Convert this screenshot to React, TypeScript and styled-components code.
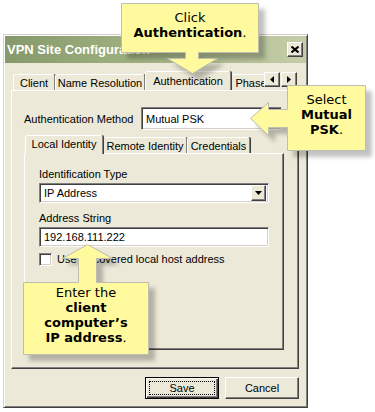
import React from 'react';
import styled, { createGlobalStyle } from 'styled-components';

const GlobalStyle = createGlobalStyle`
  html, body {
    margin: 0;
    padding: 0;
    background: #ffffff;
  }
  body {
    font-family: 'Liberation Sans', Arial, sans-serif;
  }
`;

const FACE = '#ece9d8';

const outerTabs = [
  { label: 'Client', w: 42 },
  { label: 'Name Resolution', w: 90 },
  { label: 'Authentication', w: 86, active: true },
  { label: 'Phase', w: 40 },
];

const innerTabs = [
  { label: 'Local Identity', w: 78, active: true },
  { label: 'Remote Identity', w: 84 },
  { label: 'Credentials', w: 63 },
];

const App = () => {
  return (
    <Page>
      <GlobalStyle />
      <Dialog>
        <TitleBar>
          <Title>VPN Site Configuration</Title>
          <CloseButton aria-label='Close'>
            <svg width='8' height='7' viewBox='0 0 8 7'>
              <path d='M0.5 0.5 L7.5 6.5 M7.5 0.5 L0.5 6.5' stroke='#000' strokeWidth='2' />
            </svg>
          </CloseButton>
        </TitleBar>

        <Body>
          <TabStrip>
            <TabList>
              {outerTabs.map((t) => (
                <Tab key={t.label} $w={t.w} $active={t.active} $h={t.active ? 20 : 16}>
                  {t.label}
                </Tab>
              ))}
            </TabList>
            <ScrollButton>
              <svg width='4' height='7' viewBox='0 0 4 7'>
                <polygon points='4,0 4,7 0,3.5' fill='#000' />
              </svg>
            </ScrollButton>
            <ScrollButton>
              <svg width='4' height='7' viewBox='0 0 4 7'>
                <polygon points='0,0 0,7 4,3.5' fill='#000' />
              </svg>
            </ScrollButton>
          </TabStrip>

          <Panel>
            <AuthRow>
              <AuthLabel>Authentication Method</AuthLabel>
              <TextBox $w={141} $h={23}>Mutual PSK</TextBox>
            </AuthRow>

            <InnerTabStrip>
              {innerTabs.map((t) => (
                <Tab key={t.label} $w={t.w} $active={t.active} $h={t.active ? 19 : 16}>
                  {t.label}
                </Tab>
              ))}
            </InnerTabStrip>

            <InnerPanel>
              <FieldLabel>Identification Type</FieldLabel>
              <SelectBox>
                <SelectValue>IP Address</SelectValue>
                <DropButton>
                  <svg width='7' height='4' viewBox='0 0 7 4'>
                    <polygon points='0,0 7,0 3.5,4' fill='#000' />
                  </svg>
                </DropButton>
              </SelectBox>

              <FieldLabel $gap={9}>Address String</FieldLabel>
              <TextBox $w={230} $h={20}>192.168.111.222</TextBox>

              <CheckRow>
                <CheckBox />
                <span>Use discovered local host address</span>
              </CheckRow>
            </InnerPanel>
          </Panel>

          <ButtonRow>
            <PushButton $default>Save</PushButton>
            <PushButton>Cancel</PushButton>
          </ButtonRow>
        </Body>
      </Dialog>

      <CalloutLayer>
        <CalloutShapes width='375' height='412' viewBox='0 0 375 412'>
          <path d='M121.5 3.5 H258.5 V52.5 H198.5 V58.5 H217.5 L192.5 73.5 L167.5 58.5 H185.5 V52.5 H121.5 Z' />
          <path d='M287.5 85.5 H365.5 V150.5 H287.5 V127.5 H268.5 V135.5 L250.5 118.5 L268.5 102.5 V109.5 H287.5 Z' />
          <path d='M23.5 282.5 H78.5 V258.5 H62.5 L87.5 244.5 L112.5 258.5 H96.5 V282.5 H148.5 V354.5 H23.5 Z' />
        </CalloutShapes>

        <CalloutText $x={121} $y={3} $w={138} $pt={7}>
          Click
          <br />
          <b>Authentication</b>.
        </CalloutText>
        <CalloutText $x={287} $y={85} $w={79} $pt={6.5}>
          Select
          <br />
          <b>Mutual</b>
          <br />
          <b>PSK</b>.
        </CalloutText>
        <CalloutText $x={23} $y={282} $w={126} $pt={2.5}>
          Enter the
          <br />
          <b>client</b>
          <br />
          <b>computer’s</b>
          <br />
          <b>IP address</b>.
        </CalloutText>
      </CalloutLayer>
    </Page>
  );
};

export default App;

const Page = styled.div`
  position: relative;
  width: 375px;
  height: 412px;
  overflow: hidden;
  background: #ffffff;
  font-size: 11px;
  color: #000;
`;

const Dialog = styled.div`
  box-sizing: border-box;
  width: 305px;
  height: 374px;
  margin: 34px 0 0 3px;
  padding: 1px;
  display: flex;
  flex-direction: column;
  background: ${FACE};
  border: 1px solid;
  border-color: #d4d0c8 #404040 #404040 #d4d0c8;
  box-shadow: inset 1px 1px 0 #ffffff, inset -1px -1px 0 #808080;
`;

const TitleBar = styled.div`
  flex: none;
  height: 27px;
  display: flex;
  align-items: center;
  justify-content: space-between;
  padding: 0 3px 0 2px;
  background: linear-gradient(90deg, #86996a 0%, #9eaf7f 40%, #c4cda8 100%);
`;

const Title = styled.span`
  font: bold 13px 'Liberation Sans', Arial, sans-serif;
  color: #ffffff;
`;

const CloseButton = styled.button`
  box-sizing: border-box;
  width: 16px;
  height: 15px;
  padding: 0;
  display: flex;
  align-items: center;
  justify-content: center;
  background: ${FACE};
  border: 1px solid;
  border-color: #ffffff #404040 #404040 #ffffff;
  box-shadow: inset -1px -1px 0 #808080;
`;

const Body = styled.div`
  flex: 1;
  display: flex;
  flex-direction: column;
  padding: 8px 7px 7px 6px;
`;

const TabStrip = styled.div`
  display: flex;
  height: 19px;
`;

const TabList = styled.div`
  display: flex;
  align-items: flex-end;
  width: 253px;
  padding-left: 2px;
  box-sizing: border-box;
  overflow: hidden;
  position: relative;
  z-index: 2;
`;

const Tab = styled.div<{ $w: number; $h: number; $active?: boolean }>`
  flex: none;
  box-sizing: border-box;
  width: ${(p) => p.$w}px;
  height: ${(p) => p.$h}px;
  margin-bottom: ${(p) => (p.$active ? -1 : 0)}px;
  display: flex;
  align-items: center;
  justify-content: center;
  padding-bottom: ${(p) => (p.$active ? 2 : 0)}px;
  background: ${FACE};
  border: 1px solid;
  border-bottom: none;
  border-color: #ffffff #808080 transparent #ffffff;
  border-radius: 2px 2px 0 0;
  box-shadow: 1px 0 0 #404040;
  white-space: nowrap;
  position: relative;
  z-index: ${(p) => (p.$active ? 2 : 1)};
`;

const ScrollButton = styled.button`
  flex: none;
  box-sizing: border-box;
  width: 16px;
  height: 15px;
  margin: 1px 1px 0 0;
  padding: 0;
  display: flex;
  align-items: center;
  justify-content: center;
  background: ${FACE};
  border: 1px solid;
  border-color: #ffffff #404040 #404040 #ffffff;
  box-shadow: inset -1px -1px 0 #808080;

  &:last-child {
    margin-right: 0;
  }
`;

const Panel = styled.div`
  flex: none;
  box-sizing: border-box;
  height: 279px;
  display: flex;
  flex-direction: column;
  padding: 16px 14px 18px 12px;
  border: 1px solid;
  border-color: #ffffff #404040 #404040 #ffffff;
  box-shadow: inset -1px -1px 0 #808080;
`;

const AuthRow = styled.div`
  display: flex;
  align-items: center;
`;

const AuthLabel = styled.span`
  width: 117px;
`;

const sunken = `
  box-sizing: border-box;
  background: #ffffff;
  border: 1px solid;
  border-color: #808080 #ffffff #ffffff #808080;
  box-shadow: inset 1px 1px 0 #404040, inset -1px -1px 0 #d4d0c8;
`;

const TextBox = styled.div<{ $w: number; $h: number }>`
  ${sunken}
  width: ${(p) => p.$w}px;
  height: ${(p) => p.$h}px;
  display: flex;
  align-items: center;
  padding-left: 4px;
  white-space: nowrap;
`;

const InnerTabStrip = styled.div`
  display: flex;
  align-items: flex-end;
  height: 18px;
  margin-top: 5px;
  padding-left: 1px;
  position: relative;
  z-index: 2;
`;

const InnerPanel = styled.div`
  flex: 1;
  display: flex;
  flex-direction: column;
  align-items: flex-start;
  padding: 14px 12px 0 14px;
  border: 1px solid;
  border-color: #ffffff #404040 #404040 #ffffff;
  box-shadow: inset -1px -1px 0 #808080;
`;

const FieldLabel = styled.div<{ $gap?: number }>`
  line-height: 13px;
  margin-top: ${(p) => p.$gap ?? 0}px;
  margin-bottom: 2px;
`;

const SelectBox = styled.div`
  ${sunken}
  width: 230px;
  height: 20px;
  display: flex;
  align-items: center;
  padding: 0 2px 0 4px;
`;

const SelectValue = styled.span`
  flex: 1;
`;

const DropButton = styled.span`
  box-sizing: border-box;
  width: 15px;
  height: 16px;
  display: flex;
  align-items: center;
  justify-content: center;
  background: ${FACE};
  border: 1px solid;
  border-color: #ffffff #404040 #404040 #ffffff;
  box-shadow: inset -1px -1px 0 #808080;
`;

const CheckRow = styled.label`
  display: flex;
  align-items: center;
  gap: 5px;
  margin-top: 6px;
  line-height: 13px;
`;

const CheckBox = styled.span`
  ${sunken}
  width: 13px;
  height: 13px;
`;

const ButtonRow = styled.div`
  display: flex;
  justify-content: flex-end;
  gap: 6px;
  margin-top: 8px;
`;

const PushButton = styled.button<{ $default?: boolean }>`
  position: relative;
  box-sizing: border-box;
  width: 74px;
  height: 22px;
  padding: 0;
  font: 11px 'Liberation Sans', Arial, sans-serif;
  color: #000;
  background: ${FACE};
  border: 1px solid;
  border-color: ${(p) => (p.$default ? '#000000' : '#ffffff #404040 #404040 #ffffff')};
  box-shadow: ${(p) =>
    p.$default
      ? 'inset 1px 1px 0 #ffffff, inset -1px -1px 0 #404040, inset -2px -2px 0 #808080'
      : 'inset -1px -1px 0 #808080'};

  &::after {
    content: '';
    display: ${(p) => (p.$default ? 'block' : 'none')};
    position: absolute;
    inset: 3px;
    border: 1px dotted #000;
  }
`;

const CalloutLayer = styled.div`
  position: absolute;
  inset: 0;
  pointer-events: none;
  z-index: 10;
`;

const CalloutShapes = styled.svg`
  position: absolute;
  left: 0;
  top: 0;
  filter: drop-shadow(6px 6px 2px rgba(0, 0, 0, 0.24));

  path {
    fill: #fffa9d;
    stroke: #bdbdb0;
    stroke-width: 1;
  }
`;

const CalloutText = styled.div<{ $x: number; $y: number; $w: number; $pt: number }>`
  position: absolute;
  left: ${(p) => p.$x}px;
  top: ${(p) => p.$y}px;
  width: ${(p) => p.$w}px;
  box-sizing: border-box;
  padding-top: ${(p) => p.$pt}px;
  text-align: center;
  font: 13px/15.3px 'DejaVu Sans', Verdana, sans-serif;
  color: #000;

  b {
    font-weight: bold;
  }
`;
